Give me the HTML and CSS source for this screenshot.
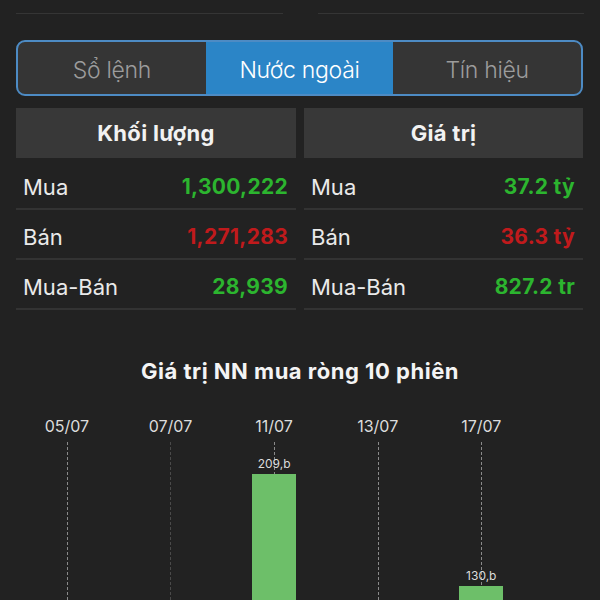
FILE: index.html
```html
<!DOCTYPE html>
<html lang="vi">
<head>
<meta charset="utf-8">
<link rel="stylesheet" href="styles.css">
</head>
<body>
<div class="topbar"><div class="tl"></div><div class="tl"></div></div>

<div class="tabs">
  <div class="tab">Sổ lệnh</div>
  <div class="tab active">Nước ngoài</div>
  <div class="tab">Tín hiệu</div>
</div>

<div class="stats">
  <div class="col">
    <div class="head">Khối lượng</div>
    <div class="row"><span class="lbl">Mua</span><span class="val up">1,300,222</span></div>
    <div class="row"><span class="lbl">Bán</span><span class="val down">1,271,283</span></div>
    <div class="row"><span class="lbl">Mua-Bán</span><span class="val up">28,939</span></div>
  </div>
  <div class="col">
    <div class="head">Giá trị</div>
    <div class="row"><span class="lbl">Mua</span><span class="val up">37.2 tỷ</span></div>
    <div class="row"><span class="lbl">Bán</span><span class="val down">36.3 tỷ</span></div>
    <div class="row"><span class="lbl">Mua-Bán</span><span class="val up">827.2 tr</span></div>
  </div>
</div>

<div class="chart-title">Giá trị NN mua ròng 10 phiên</div>

<div class="chart">
  <div class="c"><div class="date">05/07</div><div class="plot"><div class="dash"></div></div></div>
  <div class="c"><div class="date"></div><div class="plot"></div></div>
  <div class="c"><div class="date">07/07</div><div class="plot"><div class="dash faint"></div></div></div>
  <div class="c"><div class="date"></div><div class="plot"></div></div>
  <div class="c"><div class="date">11/07</div><div class="plot"><div class="dash"></div><div class="bar" style="height:296px"><span class="bv">209,b</span></div></div></div>
  <div class="c"><div class="date"></div><div class="plot"></div></div>
  <div class="c"><div class="date">13/07</div><div class="plot"><div class="dash"></div></div></div>
  <div class="c"><div class="date"></div><div class="plot"></div></div>
  <div class="c"><div class="date">17/07</div><div class="plot"><div class="dash"></div><div class="bar" style="height:184px"><span class="bv">130,b</span></div></div></div>
  <div class="c"><div class="date"></div><div class="plot"></div></div>
</div>
</body>
</html>
```

FILE: styles.css
```css
html, body {
  margin: 0;
  padding: 0;
}
body {
  background: #222222;
  width: 600px;
  height: 600px;
  overflow: hidden;
  font-family: Inter, Roboto, "Noto Sans", sans-serif;
  color: #ececec;
}

.topbar {
  display: flex;
  gap: 35px;
  padding: 0 16px;
  height: 14px;
}
.tl {
  flex: 1;
  border-bottom: 1px solid #353535;
}

.tabs {
  margin: 26px 17px 0 16px;
  height: 56px;
  box-sizing: border-box;
  border: 2px solid #4d8bc4;
  border-radius: 9px;
  display: grid;
  grid-template-columns: 1fr 1fr 1fr;
  overflow: hidden;
  background: #353535;
}
.tab {
  display: flex;
  align-items: center;
  justify-content: center;
  padding-top: 3px;
  font-size: 23px;
  font-weight: 350;
  letter-spacing: -0.3px;
  color: #9c9c9c;
}
.tab.active {
  background: #2b85c7;
  color: #ffffff;
}

.stats {
  margin-top: 12px;
  padding: 0 17px 0 16px;
  display: grid;
  grid-template-columns: 280px 1fr;
  gap: 8px;
}
.head {
  height: 50px;
  background: #383838;
  display: flex;
  align-items: center;
  justify-content: center;
  font-size: 22px;
  font-weight: 700;
  letter-spacing: 0.3px;
  color: #f2f2f2;
  margin-bottom: 2px;
}
.row {
  height: 50px;
  box-sizing: border-box;
  border-bottom: 2px solid #333333;
  display: flex;
  align-items: center;
  justify-content: space-between;
  padding: 5px 8px 0 7px;
  font-size: 22px;
}
.lbl {
  color: #eaeaea;
}
.val {
  font-weight: 700;
  font-size: 21px;
  letter-spacing: 0.3px;
}
.up { color: #2cb52f; }
.down { color: #c01a1c; }

.chart-title {
  margin-top: 46px;
  text-align: center;
  font-size: 22px;
  font-weight: 700;
  letter-spacing: 0.5px;
  line-height: 30px;
  color: #f4f4f4;
}

.chart {
  margin: 30px auto 0;
  width: 518px;
  display: grid;
  grid-template-columns: repeat(10, 1fr);
}
.c {
  display: flex;
  flex-direction: column;
  align-items: center;
}
.date {
  height: 20px;
  line-height: 20px;
  font-size: 16px;
  color: #dcdcdc;
  white-space: nowrap;
}
.plot {
  position: relative;
  width: 100%;
  height: 334px;
}
.dash {
  position: absolute;
  left: 50%;
  top: 6px;
  bottom: 0;
  width: 0;
  border-left: 1px dashed #8a8a8a;
}
.dash.faint {
  border-left-color: #4a4a4a;
}
.bar {
  position: absolute;
  bottom: 0;
  left: 50%;
  width: 44px;
  margin-left: -22px;
  background: #6dbf69;
}
.bv {
  position: absolute;
  left: -10px;
  right: -10px;
  bottom: 100%;
  margin-bottom: 4px;
  text-align: center;
  font-size: 12px;
  line-height: 12px;
  color: #dcdcdc;
}
```
